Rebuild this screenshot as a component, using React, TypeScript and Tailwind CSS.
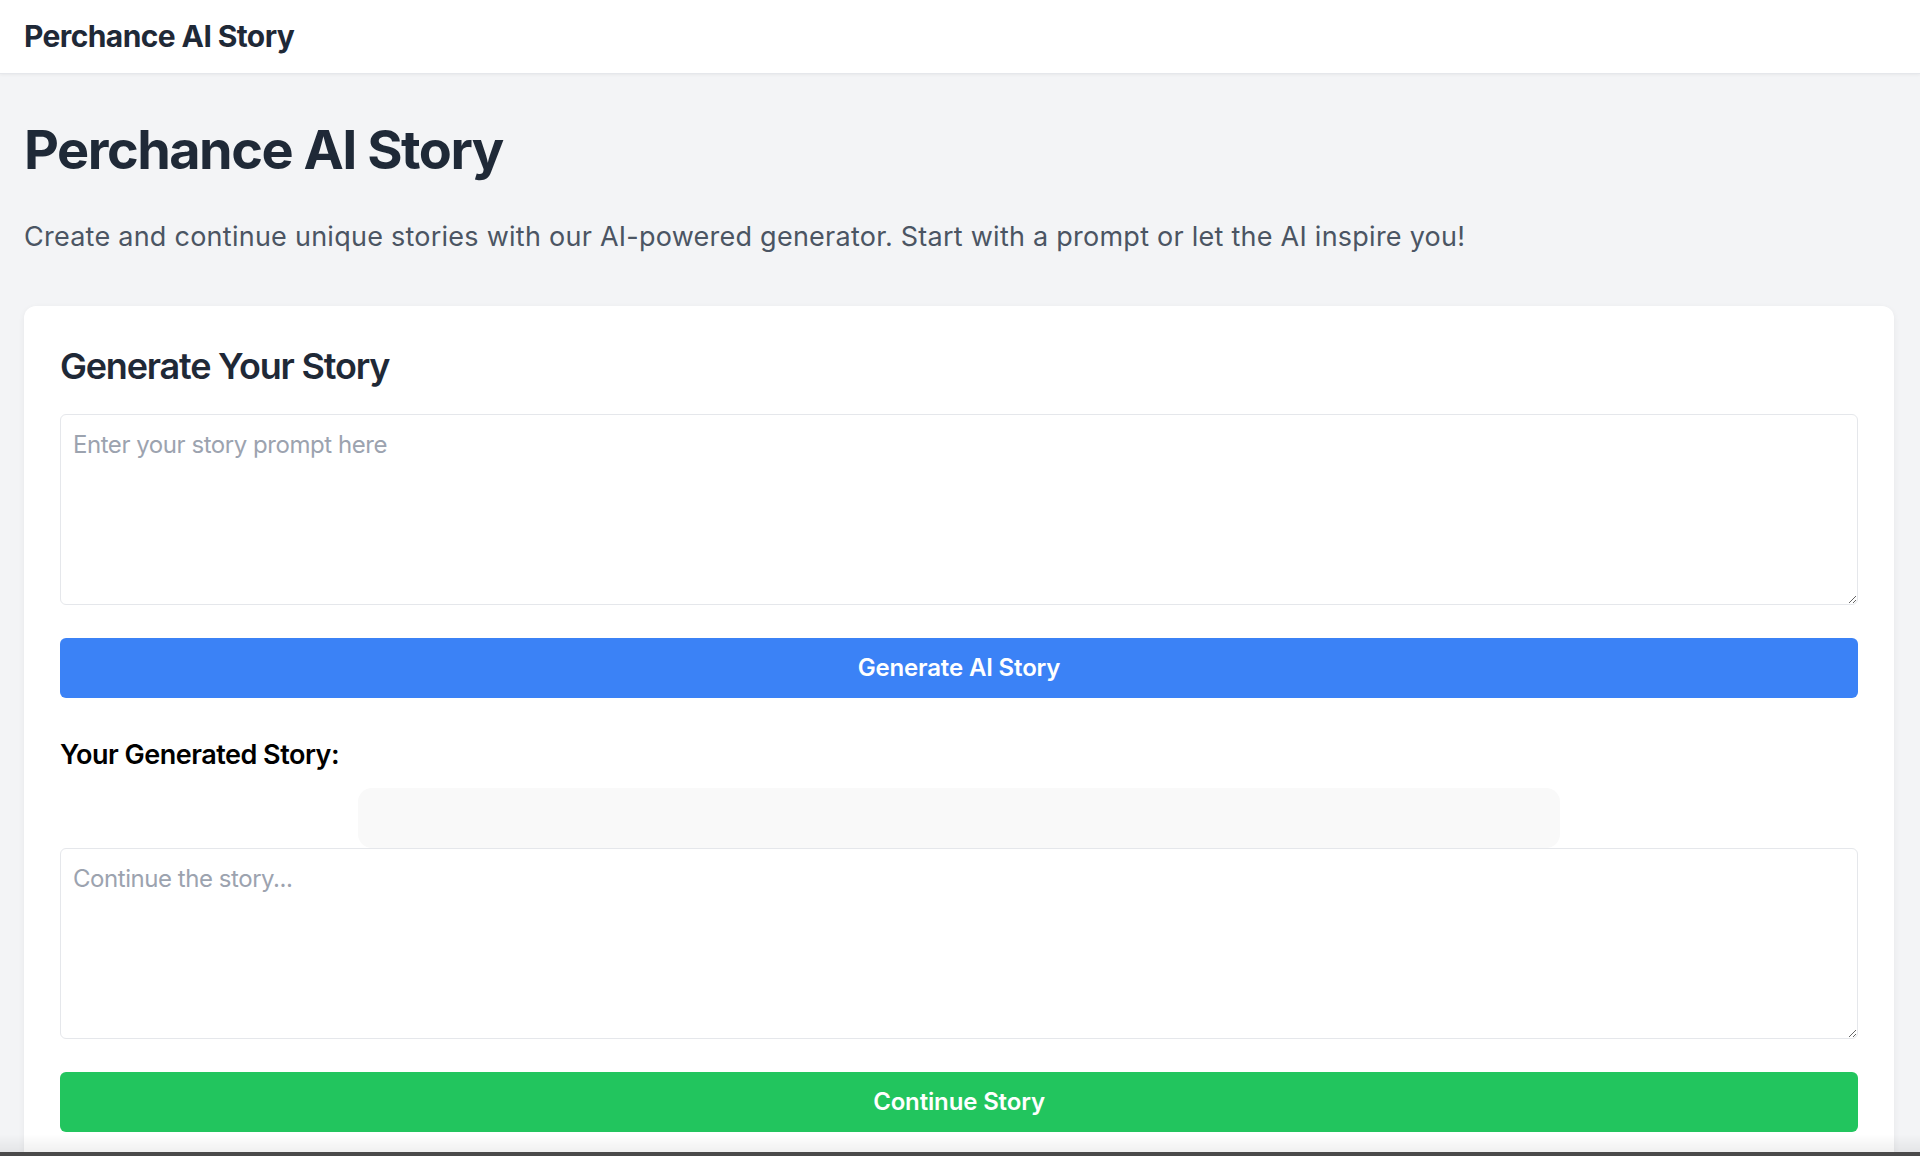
import { useState } from "react";

const App = () => {
  const [prompt, setPrompt] = useState("");
  const [story, setStory] = useState("");
  const [continuation, setContinuation] = useState("");

  const handleGenerate = () => {
    if (!prompt.trim()) return;
    setStory(prompt);
  };

  const handleContinue = () => {
    if (!continuation.trim()) return;
    setStory((s) => `${s} ${continuation}`);
    setContinuation("");
  };

  return (
    <div className="min-h-screen bg-[#f3f4f6] font-['Inter','Noto_Sans',sans-serif]">
      <header className="h-[74px] bg-white border-b border-[#e5e7eb] shadow-[0_1px_3px_rgba(0,0,0,0.05)] px-[24px] py-[15px]">
        <span className="text-[30px] leading-[42px] font-bold tracking-[-0.6px] text-[#1f2937]">Perchance AI Story</span>
      </header>

      <main className="pl-[24px] pr-[26px] pt-[46px] pb-[48px]">
        <h1 className="text-[54px] leading-[60px] font-bold tracking-[-1.5px] text-[#1f2937] mb-[36px]">Perchance AI Story</h1>
        <p className="text-[27px] leading-[42px] tracking-[0.25px] text-[#4b5563] mb-[48px]">
          Create and continue unique stories with our AI-powered generator. Start with a prompt or let the AI inspire you!
        </p>

        <section className="bg-white rounded-[12px] shadow-[0_2px_6px_rgba(0,0,0,0.06)] p-[36px]">
          <h2 className="text-[36px] leading-[48px] font-semibold tracking-[-1.2px] text-[#1f2937] mb-[24px]">Generate Your Story</h2>
          <textarea
            value={prompt}
            onChange={(e) => setPrompt(e.target.value)}
            placeholder="Enter your story prompt here"
            className="block w-full h-[191px] mb-[33px] border-[1.5px] border-[#e5e7eb] rounded-[6px] p-[12px] text-[24px] leading-[36px] tracking-[-0.45px] text-[#1f2937] placeholder:text-[#9ca3af] outline-none"
          />
          <button
            onClick={handleGenerate}
            className="block w-full h-[60px] bg-[#3b82f6] text-white text-[24px] font-semibold tracking-[-0.15px] rounded-[6px]"
          >
            Generate AI Story
          </button>

          <h3 className="mt-[36px] mb-[12px] text-[27px] leading-[42px] font-semibold tracking-[-0.5px] text-black">Your Generated Story:</h3>
          <div className="mx-auto max-w-[1202px] min-h-[60px] p-[30px] bg-[#f9f9f9] rounded-[14px] text-[24px] leading-[36px] text-[#1f2937] whitespace-pre-wrap">
            {story}
          </div>
          <textarea
            value={continuation}
            onChange={(e) => setContinuation(e.target.value)}
            placeholder="Continue the story..."
            className="block w-full h-[191px] mb-[33px] border-[1.5px] border-[#e5e7eb] rounded-[6px] p-[12px] text-[24px] leading-[36px] tracking-[-0.45px] text-[#1f2937] placeholder:text-[#9ca3af] outline-none"
          />
          <button
            onClick={handleContinue}
            className="block w-full h-[60px] bg-[#22c55e] text-white text-[24px] font-semibold tracking-[-0.15px] rounded-[6px]"
          >
            Continue Story
          </button>
        </section>
      </main>

      {/* bottom edge of the window frame */}
      <div className="pointer-events-none fixed left-0 right-0 bottom-[4px] h-[18px] bg-gradient-to-b from-transparent to-[rgba(0,0,0,0.06)]" />
      <div className="pointer-events-none fixed left-0 right-0 bottom-0 h-[4px] bg-[#4a4a4a]" />
    </div>
  );
};

export default App;
